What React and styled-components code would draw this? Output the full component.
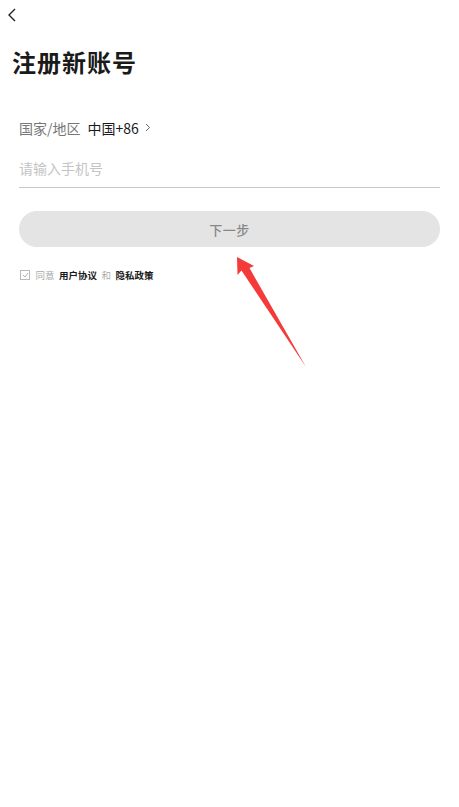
import React from 'react'
import styled, { createGlobalStyle } from 'styled-components'

const GlobalStyle = createGlobalStyle`
  html, body {
    margin: 0;
    padding: 0;
    background: #fff;
  }
  body {
    font-family: "Noto Sans CJK SC", "Noto Sans", sans-serif;
  }
`

const App = () => {
  return (
    <Page>
      <GlobalStyle />
      <TopBar>
        <BackButton type="button" aria-label="back">
          <svg width="10" height="14" viewBox="0 0 10 14">
            <path d="M8 1 L2 7 L8 13" fill="none" stroke="#222" strokeWidth="1.4" />
          </svg>
        </BackButton>
      </TopBar>
      <Title>注册新账号</Title>

      <Form>
        <CountryRow>
          <CountryLabel>国家/地区</CountryLabel>
          <CountryValue>中国+86</CountryValue>
          <Chevron>
            <svg width="6" height="9" viewBox="0 0 6 9">
              <path d="M1 1 L4.5 4.5 L1 8" fill="none" stroke="#666" strokeWidth="1" />
            </svg>
          </Chevron>
        </CountryRow>
        <PhoneInput placeholder="请输入手机号" />
        <NextButton type="button">下一步</NextButton>
        <Agreement>
          <CheckBox>
            <svg width="7" height="6" viewBox="0 0 7 6">
              <path d="M1 3 L3 5 L6 1" fill="none" stroke="#aaa" strokeWidth="0.9" />
            </svg>
          </CheckBox>
          <Muted>同意</Muted>
          <Strong>用户协议</Strong>
          <Muted>和</Muted>
          <Strong>隐私政策</Strong>
        </Agreement>
      </Form>

      <Arrow width="80" height="120" viewBox="0 0 80 120">
        <path d="M7 7 L7.5 25 L11.5 20.5 L76 117 L19.5 18 L24 16 Z" fill="#f53a3a" />
      </Arrow>
    </Page>
  )
}

const Page = styled.div`
  position: relative;
  width: 459px;
  min-height: 807px;
  background: #fff;
  overflow: hidden;
`

const TopBar = styled.div`
  height: 36px;
  display: flex;
  align-items: center;
  padding-left: 5px;
`

const BackButton = styled.button`
  border: none;
  background: transparent;
  padding: 0;
  width: 14px;
  height: 16px;
  display: flex;
  align-items: center;
  justify-content: center;
  margin-top: -7px;
`

const Title = styled.h1`
  margin: 9px 0 0 12px;
  font-size: 24px;
  font-weight: 700;
  line-height: 34px;
  color: #1a1a1a;
  letter-spacing: 1px;
`

const Form = styled.div`
  padding: 0 19px;
  margin-top: 39px;
  display: flex;
  flex-direction: column;
`

const CountryRow = styled.div`
  display: flex;
  align-items: center;
  height: 20px;
  font-size: 14px;
`

const CountryLabel = styled.span`
  color: #777;
`

const CountryValue = styled.span`
  color: #1a1a1a;
  margin-left: 7px;
`

const Chevron = styled.span`
  display: flex;
  margin-left: 6px;
  margin-top: -1px;
`

const PhoneInput = styled.input`
  margin-top: 20px;
  height: 20px;
  padding: 0 0 9px 0;
  border: none;
  border-bottom: 1px solid #c8c8c8;
  outline: none;
  font-family: inherit;
  font-size: 14px;
  color: #333;
  &::placeholder {
    color: #c4c4c4;
  }
`

const NextButton = styled.button`
  margin-top: 23px;
  height: 36px;
  border: none;
  border-radius: 18px;
  background: #e4e4e4;
  color: #888;
  font-family: inherit;
  font-size: 13px;
  font-weight: 500;
  letter-spacing: 0.5px;
`

const Agreement = styled.div`
  display: flex;
  align-items: center;
  gap: 4.5px;
  margin-top: 21px;
  font-size: 9.5px;
  line-height: 14px;
`

const CheckBox = styled.span`
  width: 8px;
  height: 8px;
  border: 1px solid #bbb;
  display: flex;
  align-items: center;
  justify-content: center;
  margin-left: 1px;
  margin-right: 1px;
`

const Muted = styled.span`
  color: #aaa;
`

const Strong = styled.span`
  color: #1a1a1a;
  font-weight: 700;
`

const Arrow = styled.svg`
  position: absolute;
  left: 230px;
  top: 250px;
`

export default App
